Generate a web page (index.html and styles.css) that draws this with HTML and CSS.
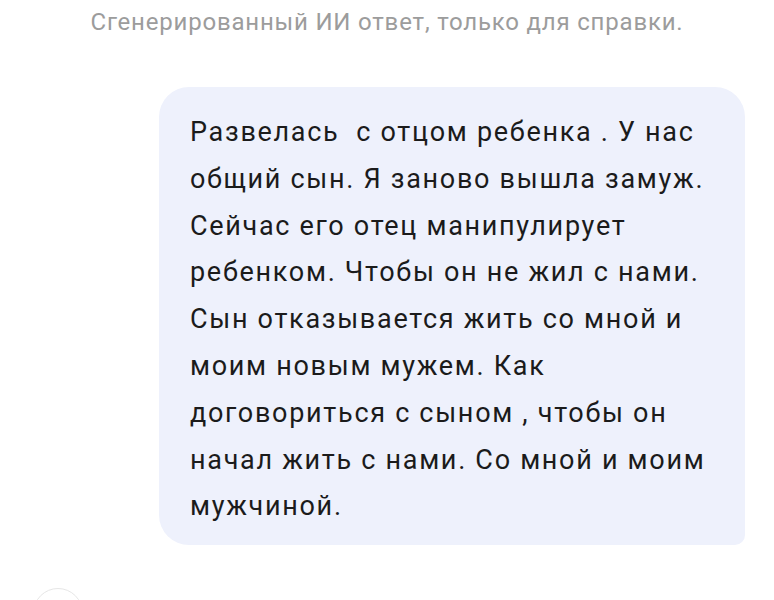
FILE: index.html
```html
<!DOCTYPE html>
<html lang="ru">
<head>
<meta charset="utf-8">
<link rel="stylesheet" href="styles.css">
</head>
<body>
<div class="page">
  <p class="notice">Сгенерированный ИИ ответ, только для справки.</p>
  <div class="row">
    <div class="bubble">Развелась  с отцом ребенка . У нас<br>общий сын. Я заново вышла замуж.<br>Сейчас его отец манипулирует<br>ребенком. Чтобы он не жил с нами.<br>Сын отказывается жить со мной и<br>моим новым мужем. Как<br>договориться с сыном , чтобы он<br>начал жить с нами. Со мной и моим<br>мужчиной.</div>
  </div>
  <div class="avatar-row">
    <div class="avatar"></div>
  </div>
</div>
</body>
</html>
```
FILE: styles.css
```css
html, body {
  margin: 0;
  padding: 0;
  background: #ffffff;
}
.page {
  width: 774px;
  height: 600px;
  overflow: hidden;
  font-family: Roboto, "Noto Sans", sans-serif;
}
.notice {
  margin: 0;
  padding-top: 7px;
  text-align: center;
  font-size: 24px;
  line-height: 30px;
  letter-spacing: 0.8px;
  color: #9c9c9c;
}
.row {
  display: flex;
  justify-content: flex-end;
  padding: 50px 29px 0 0;
}
.bubble {
  width: 586px;
  box-sizing: border-box;
  background: #eef1fc;
  border-radius: 30px 30px 10px 30px;
  padding: 22px 20px 15px 31px;
  font-size: 27px;
  line-height: 46.8px;
  letter-spacing: 1.7px;
  color: #1b1b1b;
  white-space: pre-wrap;
}
.avatar-row {
  display: flex;
  padding: 43px 0 0 33px;
}
.avatar {
  width: 50px;
  height: 50px;
  border-radius: 50%;
  border: 1.5px solid #e6e6e6;
  box-sizing: border-box;
}
```
